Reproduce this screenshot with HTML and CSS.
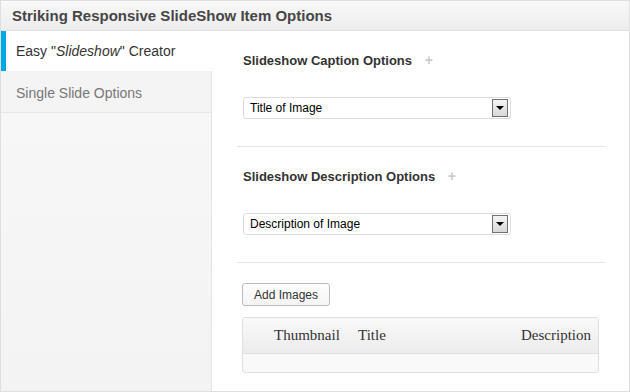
FILE: index.html
```html
<!DOCTYPE html>
<html lang="en">
<head>
  <meta charset="UTF-8">
  <title>Slideshow Item Options</title>
  <link rel="stylesheet" href="styles.css">
</head>
<body>
  <div class="postbox">
    <h3 class="hndle">Striking Responsive SlideShow Item Options</h3>
    <div class="inside">
      <ul class="tabs">
        <li class="tab active">Easy "<em>Slideshow</em>" Creator</li>
        <li class="tab">Single Slide Options</li>
      </ul>
      <div class="panel">
        <div class="option">
          <h4>Slideshow Caption Options <span class="plus">+</span></h4>
          <div class="select">
            <span>Title of Image</span>
            <span class="arrow"></span>
          </div>
        </div>
        <div class="option">
          <h4>Slideshow Description Options <span class="plus">+</span></h4>
          <div class="select">
            <span>Description of Image</span>
            <span class="arrow"></span>
          </div>
        </div>
        <div class="images">
          <button class="button">Add Images</button>
          <table class="slides">
            <thead>
              <tr>
                <th class="col-thumb">Thumbnail</th>
                <th class="col-title">Title</th>
                <th class="col-desc">Description</th>
              </tr>
            </thead>
            <tbody>
              <tr><td colspan="3"></td></tr>
            </tbody>
          </table>
        </div>
      </div>
    </div>
  </div>
</body>
</html>
```

FILE: styles.css
```css
body {
  margin: 0;
  background: #fff;
  font-family: "Liberation Sans", Arial, sans-serif;
  color: #333;
}

.postbox {
  width: 630px;
  height: 392px;
  box-sizing: border-box;
  border: 1px solid #dfdfdf;
  display: flex;
  flex-direction: column;
}

.hndle {
  margin: 0;
  height: 29px;
  padding: 0 11px;
  font-size: 15px;
  line-height: 29px;
  font-weight: bold;
  color: #464646;
  background: linear-gradient(#f9f9f9, #ececec);
  border-bottom: 1px solid #dfdfdf;
}

.inside {
  flex: 1;
  display: flex;
}

.tabs {
  list-style: none;
  margin: 0;
  padding: 0;
  width: 210px;
  flex-shrink: 0;
  background: linear-gradient(#f8f8f8, #f3f3f3);
  border-right: 1px solid #e3e3e3;
}

.tab {
  height: 41px;
  padding-left: 15px;
  font-size: 14px;
  line-height: 45px;
  color: #777;
  background: #f4f4f4;
  border-bottom: 1px solid #e6e6e6;
}

.tab.active {
  height: 40px;
  line-height: 41px;
  color: #333;
  background: #fff;
  border-bottom: none;
  border-left: 5px solid #00a8e6;
  padding-left: 10px;
  margin-right: -1px;
}

.panel {
  flex: 1;
  padding: 0 25px 0 25px;
}

.option {
  padding: 21px 0 27px 6px;
  border-bottom: 1px solid #e3e3e3;
}

.option h4 {
  margin: 0 0 27px;
  height: 18px;
  font-size: 13px;
  line-height: 18px;
  font-weight: bold;
  color: #333;
}

.plus {
  margin-left: 9px;
  color: #ccc;
  font-size: 14px;
  line-height: 13px;
  font-weight: bold;
}

.select {
  width: 268px;
  height: 22px;
  box-sizing: border-box;
  border: 1px solid #dcdcdc;
  border-radius: 3px;
  display: flex;
  align-items: center;
  justify-content: space-between;
  padding: 0 2px 0 6px;
  font-size: 12px;
  color: #000;
}

.arrow {
  width: 14px;
  height: 16px;
  border: 1px solid #707070;
  background: linear-gradient(#f4f4f4, #d8d8d8);
  position: relative;
}

.arrow::after {
  content: "";
  position: absolute;
  left: 3px;
  top: 6px;
  border-left: 4px solid transparent;
  border-right: 4px solid transparent;
  border-top: 4px solid #000;
}

.images {
  padding: 20px 6px 0 5px;
}

.button {
  height: 23px;
  padding: 0 11px;
  font-family: "Liberation Sans", Arial, sans-serif;
  font-size: 12px;
  color: #333;
  background: linear-gradient(#fefefe, #f4f4f4);
  border: 1px solid #bbb;
  border-radius: 3px;
}

.slides {
  margin-top: 11px;
  width: 357px;
  border: 1px solid #dfdfdf;
  border-radius: 3px;
  border-spacing: 0;
  background: #f9f9f9;
}

.slides th {
  height: 35px;
  padding: 0 7px;
  font-family: "Liberation Serif", Georgia, serif;
  font-size: 15px;
  font-weight: normal;
  text-align: left;
  color: #333;
  background: linear-gradient(#f9f9f9, #ececec);
  border-bottom: 1px solid #dfdfdf;
}

.slides .col-thumb {
  padding-left: 31px;
  width: 70px;
}

.slides .col-desc {
  text-align: right;
}

.slides td {
  height: 16px;
}
```
